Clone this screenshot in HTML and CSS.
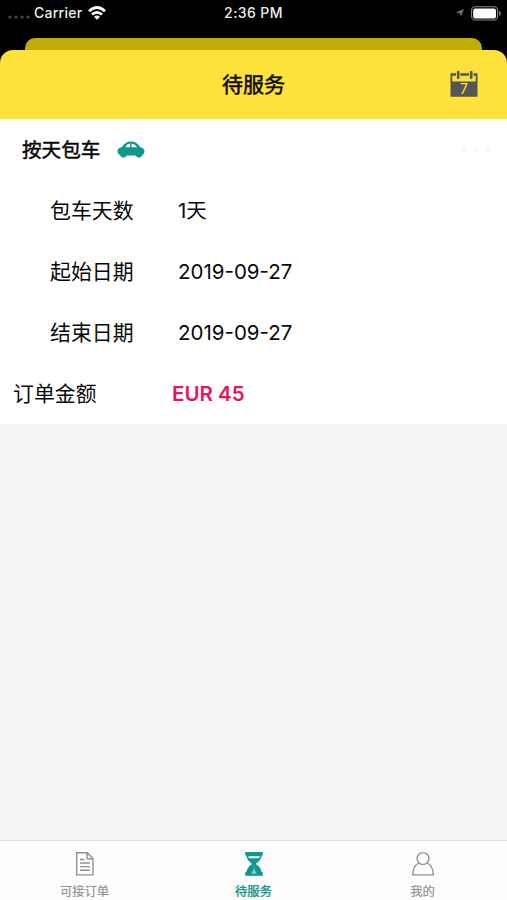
FILE: index.html
```html
<!DOCTYPE html>
<html lang="zh-CN">
<head>
<meta charset="utf-8">
<title>待服务</title>
<link rel="stylesheet" href="styles.css">
</head>
<body>
<div class="status">
  <div class="carrier">
    <svg width="22" height="4" viewBox="0 0 22 4" fill="#4a4a4a"><circle cx="2" cy="2" r="1.6"/><circle cx="8" cy="2" r="1.6"/><circle cx="14" cy="2" r="1.6"/><circle cx="20" cy="2" r="1.6"/></svg>
    <span>Carrier</span>
    <svg class="wifi" width="18" height="14" viewBox="0 0 18 14" fill="none" stroke="#fff" stroke-width="2.7"><path d="M1 5.2Q9-2.2 17 5.2M4 8.6Q9 4 14 8.6"/><path d="M9 13.8L6 10.8Q9 8.4 12 10.8Z" fill="#fff" stroke="none"/></svg>
  </div>
  <time class="clock">2:36 PM</time>
  <div class="power">
    <svg width="8" height="8" viewBox="0 0 8 8" fill="#777"><path d="M8 0L4.8 7.6L4 4.2L0 3.6Z"/></svg>
    <svg width="30" height="15" viewBox="0 0 30 15"><rect x=".6" y=".8" width="26" height="13.2" rx="3.6" fill="none" stroke="#888" stroke-width="1.1"/><rect x="2.2" y="2.4" width="22.8" height="10" rx="2" fill="#fff"/><path d="M28 5Q30 5.5 30 7.4T28 9.8Z" fill="#777"/></svg>
  </div>
</div>
<div class="behind"></div>
<header class="header">
  <h1>待服务</h1>
  <svg class="calendar" width="28" height="27" viewBox="0 0 28 27"><path fill="#555" fill-rule="evenodd" d="M.5 2.2H27.5V25.8H.5ZM2.3 4.8V10.4H25.7V4.8Z"/><path d="M8.2 0V8M21.2 0V8" stroke="#fde23b" stroke-width="4.4"/><path d="M8.2 1V6.8M21.2 1V6.8" stroke="#555" stroke-width="2.6" stroke-linecap="round"/><text x="14" y="23.4" text-anchor="middle">7</text></svg>
</header>
<main>
  <section class="order">
    <div class="row type">
      <h2>按天包车</h2>
      <svg width="28" height="18" viewBox="0 0 28 18"><path fill="#0c988b" fill-rule="evenodd" d="M.5 9.8Q.7 7.6 2.5 7.1L4.8 6.3Q8.2 .6 14 .6Q20 .6 23.2 6.3Q27.5 7.2 27.5 10.6Q27.5 13.4 25.3 13.8Q24.7 16.6 22 16.6Q19.4 16.6 18.6 14.5H10Q9 16.6 6.5 16.6Q3.8 16.6 3 13.8Q.5 13.5 .5 9.8ZM8.2 6.3H13V2.6Q10 2.9 8.2 6.3ZM14.5 2.6V6.3H20Q18.2 3 14.5 2.6Z"/></svg>
      <svg class="more" width="30" height="6" viewBox="0 0 30 6" fill="#f8f8f8"><circle cx="3" cy="3" r="2.4"/><circle cx="15" cy="3" r="2.4"/><circle cx="27" cy="3" r="2.4"/></svg>
    </div>
    <dl>
      <div class="row detail"><dt>包车天数</dt><dd>1天</dd></div>
      <div class="row detail"><dt>起始日期</dt><dd>2019-09-27</dd></div>
      <div class="row detail"><dt>结束日期</dt><dd>2019-09-27</dd></div>
      <div class="row total"><dt>订单金额</dt><dd>EUR 45</dd></div>
    </dl>
  </section>
</main>
<nav class="tabs">
  <a class="tab"><svg width="20" height="26" viewBox="0 0 20 26" fill="none" stroke="#929292" stroke-width="1.4"><path d="M1.7 1.7H12.3L18 7.5V23.9H1.7ZM12 1.7V7.8H18M5 8.5H9.5M5 12H14.8M5 15.6H14.8M5 19.2H14.8"/></svg><span>可接订单</span></a>
  <a class="tab active"><svg width="20" height="26" viewBox="0 0 20 26"><path fill="#0c988b" fill-rule="evenodd" d="M1.2 1H18.8V4.6H17.6Q17.2 9.5 11.7 13Q17.2 16.5 17.6 21.2H18.8V24.8H1.2V21.2H2.4Q2.8 16.5 8.3 13Q2.8 9.5 2.4 4.6H1.2ZM4.2 5.2Q4.5 6.4 5 7.2H15Q15.6 6.3 15.8 5.2Z"/><path d="M10 14V18L7.5 22.4H12.5L10 18" fill="#8ed0c9" stroke="#8ed0c9" stroke-width=".4"/></svg><span>待服务</span></a>
  <a class="tab"><svg width="24" height="26" viewBox="0 0 24 26" fill="none" stroke="#929292" stroke-width="1.4"><circle cx="12" cy="7.5" r="5.9"/><path d="M7.8 12Q1.7 15.2 1.7 23.9H22.3Q22.3 15.2 16.2 12"/></svg><span>我的</span></a>
</nav>
</body>
</html>
```
FILE: styles.css
```css
* { box-sizing: border-box; }
body {
  margin: 0;
  height: 900px;
  display: flex;
  flex-direction: column;
  background: #000;
  color: #080808;
  font-family: Inter, "Noto Sans CJK SC", sans-serif;
  overflow: hidden;
}
h1, h2, dl, dt, dd { margin: 0; }
svg { display: block; flex: none; }
.status {
  height: 38px;
  padding: 0 6px 12px 8px;
  display: grid;
  grid-template-columns: 1fr auto 1fr;
  align-items: center;
  color: #eee;
  font-size: 14px;
  line-height: 16px;
  font-weight: 500;
}
.carrier { display: flex; align-items: center; gap: 4px; }
.carrier svg:first-child { margin-top: 8px; }
.carrier span { letter-spacing: .25px; }
.wifi { margin-left: 2px; }
.clock { letter-spacing: .4px; margin-right: 2px; }
.power { display: flex; align-items: center; justify-content: flex-end; gap: 7px; }
.behind {
  height: 12px;
  margin: 0 25px;
  border-radius: 10px 10px 0 0;
  background: #c2ab05;
}
.header {
  position: relative;
  height: 69px;
  display: flex;
  align-items: center;
  justify-content: center;
  border-radius: 13px 13px 0 0;
  background: #fde23b;
}
.header h1 { font-size: 21px; font-weight: 400; line-height: 30px; padding-top: 1px; -webkit-text-stroke: .5px; }
.calendar { position: absolute; right: 29px; top: 21px; }
.calendar text { font: 14px Inter, sans-serif; fill: #fde23b; }
main { flex: 1; background: #f5f5f5; }
.order { background: #fff; }
.row { height: 61px; display: flex; align-items: center; }
.type { padding: 0 16px 0 22px; }
.type h2 { width: 95px; font-size: 19.6px; font-weight: 400; padding-bottom: 3px; -webkit-text-stroke: .5px; }
.more { margin-left: auto; }
dt { font-size: 20.9px; padding-bottom: 3px; }
dd { font-size: 20.5px; }
.detail { padding-left: 50px; }
.detail dt { width: 128px; }
.detail:first-child dd { padding-bottom: 3px; }
.total { padding-left: 13px; }
.total dt { width: 159px; }
.total dd { color: #e9145f; font-weight: 600; }
.tabs {
  height: 60px;
  display: grid;
  grid-template-columns: repeat(3, 1fr);
  border-top: 1px solid #dedede;
  background: #fdfdfd;
}
.tab {
  display: flex;
  flex-direction: column;
  align-items: center;
  padding-top: 10px;
  gap: 6px;
  color: #929292;
  font-size: 12.3px;
  line-height: 18px;
  -webkit-text-stroke: .2px;
}
.active { color: #0c988b; -webkit-text-stroke: .35px; }
```
